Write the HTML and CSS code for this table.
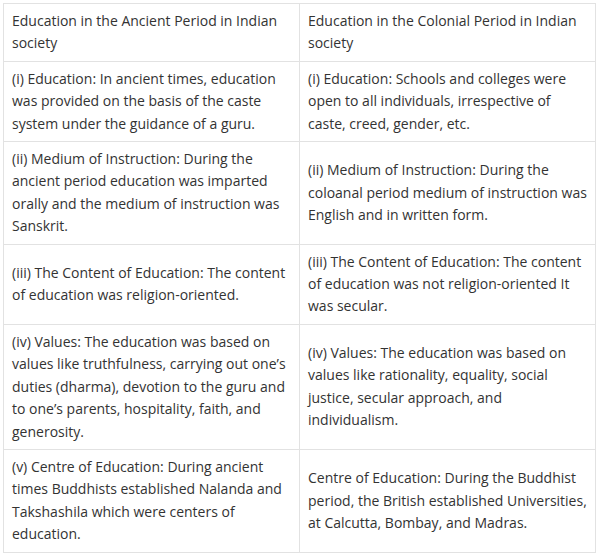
FILE: index.html
```html
<!DOCTYPE html>
<html>
<head>
<meta charset="utf-8">
<link rel="stylesheet" href="styles.css">
</head>
<body>
<table class="compare">
  <tbody>
    <tr>
      <td>Education in the Ancient Period in Indian society</td>
      <td>Education in the Colonial Period in Indian society</td>
    </tr>
    <tr>
      <td>(i) Education: In ancient times, education was provided on the basis of the caste system under the guidance of a guru.</td>
      <td>(i) Education: Schools and colleges were open to all individuals, irrespective of caste, creed, gender, etc.</td>
    </tr>
    <tr>
      <td>(ii) Medium of Instruction: During the ancient period education was imparted orally and the medium of instruction was Sanskrit.</td>
      <td>(ii) Medium of Instruction: During the coloanal period medium of instruction was English and in written form.</td>
    </tr>
    <tr>
      <td>(iii) The Content of Education: The content of education was religion-oriented.</td>
      <td>(iii) The Content of Education: The content of education was not religion-oriented It was secular.</td>
    </tr>
    <tr>
      <td>(iv) Values: The education was based on values like truthfulness, carrying out one’s duties (dharma), devotion to the guru and to one’s parents, hospitality, faith, and generosity.</td>
      <td>(iv) Values: The education was based on values like rationality, equality, social justice, secular approach, and individualism.</td>
    </tr>
    <tr>
      <td>(v) Centre of Education: During ancient times Buddhists established Nalanda and Takshashila which were centers of education.</td>
      <td>Centre of Education: During the Buddhist period, the British established Universities, at Calcutta, Bombay, and Madras.</td>
    </tr>
  </tbody>
</table>
</body>
</html>
```
FILE: styles.css
```css
html, body {
  background: #ffffff;
}
body {
  margin: 3px;
  font-family: "Open Sans", "Noto Sans", sans-serif;
  font-size: 14px;
  line-height: 22.4px;
  color: #333333;
}
.compare {
  width: 593px;
  border-collapse: collapse;
  table-layout: fixed;
}
.compare td {
  width: 50%;
  border: 1px solid #e2e2e2;
  padding: 6px 8px;
  vertical-align: middle;
  text-align: left;
}
```
